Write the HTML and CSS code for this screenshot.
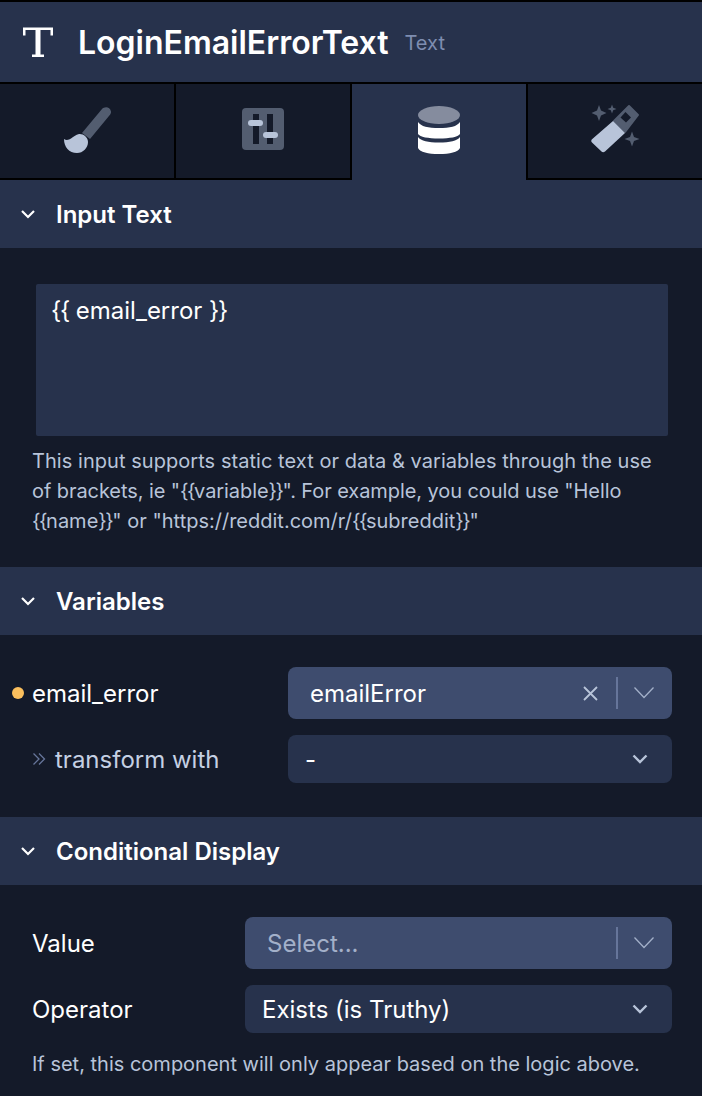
FILE: index.html
```html
<!DOCTYPE html>
<html lang="en">
<head>
<meta charset="utf-8">
<title>LoginEmailErrorText</title>
<link rel="stylesheet" href="styles.css">
</head>
<body>
<div class="panel">
  <header class="head">
    <svg class="t-icon" width="32" height="32" viewBox="0 0 32 32"><path d="M1 1.500h30v8h-2.500V4H18.500v24.500h3.500V31H10v-2.500h3.500V4H3.500v5.500H1z" fill="#fff"/></svg>
    <h1 class="title">LoginEmailErrorText</h1>
    <span class="kind">Text</span>
  </header>
  <nav class="tabs">
    <div class="tab">
      <svg class="ico" width="50" height="50" viewBox="0 0 50 50"><path d="M40 3c2-2.500 8-3 9 2.500.2 1.200-.2 2-.8 3L28 33l-8-6z" fill="#535d70"/><path d="M2 33c2 1.500 5 1 7-.5 2-1.500 5-4 8-4.500 4-.5 9 3 9 8 0 6-5 11-11 11-8 0-13-6-13-14z" fill="#b8c4d9"/></svg>
    </div>
    <div class="tab">
      <svg class="ico" width="50" height="50" viewBox="0 0 50 50"><rect x="4" y="2" width="42" height="42" rx="4" fill="#535d70"/><rect x="15" y="8" width="6" height="30" fill="#141a29"/><rect x="29" y="8" width="6" height="30" fill="#141a29"/><rect x="10" y="14" width="15" height="6" rx="3" fill="#b8c4d9"/><rect x="25" y="26" width="15" height="6" rx="3" fill="#b8c4d9"/></svg>
    </div>
    <div class="tab tab-on">
      <svg class="ico" width="50" height="50" viewBox="0 0 50 50"><ellipse cx="25" cy="9" rx="21" ry="9" fill="#858c9e"/><path d="M4 16c3 4.500 10 6 21 6s18-1.500 21-6v12c-2 3-10 4.500-21 4.500S6 31 4 28z" fill="#fff"/><path d="M4 31c3 4 10 5.500 21 5.500S43 35 46 31v11c-2 4-10 6-21 6S6 46 4 42z" fill="#fff"/></svg>
    </div>
    <div class="tab tab-last">
      <svg class="ico" width="50" height="50" viewBox="0 0 50 50"><path d="M9 -1l2 5.500L16.500 7 11 9.500 9 15 7 9.500 1.500 7 7 4.500z" fill="#535d70"/><path d="M22 -1.500l1.200 3.300L26.500 3l-3.300 1.200L22 7.500l-1.200-3.300L17.500 3l3.300-1.200z" fill="#535d70"/><path d="M42 25.500l2 5.500 5.500 2-5.500 2-2 5.500-2-5.500-5.500-2 5.500-2z" fill="#535d70"/><path d="M39 0 48 9 35 26 24 15z" fill="#535d70" stroke="#535d70" stroke-width="2" stroke-linejoin="round"/><path d="M30.500 11.500l5-5.500 5.500 5.500-5 5z" fill="#141a29"/><path d="M23 15 35 27 15 45.500c-1.200 1-2.500 1-3.500 0L2 36.500c-1-1-1-2.300 0-3.300z" fill="#b8c4d9"/></svg>
    </div>
  </nav>

  <section>
    <div class="sec-head"><svg class="caret" width="16" height="16" viewBox="0 0 16 16"><path d="M2 5l6 6 6-6" fill="none" stroke="#fff" stroke-width="2.200"/></svg><h2 class="sec-title">Input Text</h2></div>
    <div class="sec-body input-body">
      <div class="textarea"><span class="pair-lg">{{</span> email_error <span class="pair-lg">}}</span></div>
      <p class="help"><span class="line-wide">This input supports static text or data &amp; variables through the use</span> <span class="line-narrow">of brackets, ie "<span class="pair">{{</span>variable<span class="pair">}}</span>". For example, you could use "Hello</span> <span class="pair">{{</span>name<span class="pair">}}</span>" or "https://reddit.com/r/<span class="pair">{{</span>subreddit<span class="pair">}}</span>"</p>
    </div>
  </section>

  <section>
    <div class="sec-head"><svg class="caret" width="16" height="16" viewBox="0 0 16 16"><path d="M2 5l6 6 6-6" fill="none" stroke="#fff" stroke-width="2.200"/></svg><h2 class="sec-title">Variables</h2></div>
    <div class="sec-body var-body">
      <div class="row row-var">
        <div class="label var-label"><span class="dot"></span>email_error</div>
        <div class="select select-big var-select">
          <span class="val val-var">emailError</span>
          <svg class="x" width="15" height="15" viewBox="0 0 15 15"><path d="M1 1l13 13M14 1 1 14" fill="none" stroke="#b8c4d9" stroke-width="1.800"/></svg>
          <span class="sep"></span>
          <svg class="chev-thin" width="20" height="14" viewBox="0 0 20 14"><path d="M.5 1.500 10 11.500l9.500-10" fill="none" stroke="#a3b0c9" stroke-width="1.300"/></svg>
        </div>
      </div>
      <div class="row row-trans">
        <div class="label trans-label"><svg class="dbl" width="14" height="14" viewBox="0 0 14 14"><path d="M1.500 1.500 7 7l-5.500 5.500M7 1.500 12.500 7 7 12.500" fill="none" stroke="#66759a" stroke-width="1.300"/></svg>transform with</div>
        <div class="select select-small var-select">
          <span class="val val-dash">-</span>
          <svg class="chev" width="16" height="10" viewBox="0 0 16 10"><path d="M1.500 1.500 8 8l6.500-6.500" fill="none" stroke="#b8c4d9" stroke-width="2.400"/></svg>
        </div>
      </div>
    </div>
  </section>

  <section>
    <div class="sec-head"><svg class="caret" width="16" height="16" viewBox="0 0 16 16"><path d="M2 5l6 6 6-6" fill="none" stroke="#fff" stroke-width="2.200"/></svg><h2 class="sec-title">Conditional Display</h2></div>
    <div class="sec-body cond-body">
      <div class="row row-var">
        <div class="label">Value</div>
        <div class="select select-big cond-select">
          <span class="val val-ph">Select...</span>
          <span class="sep"></span>
          <svg class="chev-thin" width="20" height="14" viewBox="0 0 20 14"><path d="M.5 1.500 10 11.500l9.500-10" fill="none" stroke="#a3b0c9" stroke-width="1.300"/></svg>
        </div>
      </div>
      <div class="row row-op">
        <div class="label">Operator</div>
        <div class="select select-small cond-select">
          <span class="val val-op">Exists (is Truthy)</span>
          <svg class="chev" width="16" height="10" viewBox="0 0 16 10"><path d="M1.500 1.500 8 8l6.500-6.500" fill="none" stroke="#b8c4d9" stroke-width="2.400"/></svg>
        </div>
      </div>
      <p class="help help-cond">If set, this component will only appear based on the logic above.</p>
    </div>
  </section>
</div>
</body>
</html>
```
FILE: styles.css
```css
* { box-sizing: border-box; }
html, body { margin: 0; padding: 0; }
body {
  width: 702px;
  height: 1096px;
  overflow: hidden;
  background: #141a29;
  font-family: Inter, "Liberation Sans", sans-serif;
  color: #fff;
}
.panel { display: flex; flex-direction: column; }
.head {
  height: 84px;
  background: #27324c;
  border-top: 2px solid #000;
  border-bottom: 2px solid #000;
  display: flex;
  align-items: center;
  padding-left: 22px;
}
.t-icon { width: 32px; height: 32px; flex: none; }
.title { margin: 2px 0 0 24px; font-size: 32px; font-weight: 600; line-height: 36px; }
.kind { margin: 2px 0 0 16px; font-size: 20px; color: #7e8db0; }
.tabs { display: grid; grid-template-columns: repeat(4, 176px); height: 96px; }
.tab {
  display: flex;
  align-items: center;
  justify-content: center;
  background: #141a29;
  border-right: 2px solid #000;
  border-bottom: 2px solid #000;
}
.ico { overflow: visible; }
.tab-on { background: #27324c; border-bottom: 0; padding-bottom: 2px; }
.tab-last { border-right: 0; border-left: 2px solid #000; margin-left: -2px; width: 176px; }
.sec-head {
  height: 68px;
  background: #27324c;
  display: flex;
  align-items: center;
  padding-left: 20px;
}
.sec-title { margin: 2px 0 0 20px; font-size: 24px; font-weight: 600; line-height: 30px; }
.sec-body { background: #141a29; }
.input-body { height: 319px; padding: 36px 34px 0 32px; }
.textarea {
  margin-left: 4px;
  height: 152px;
  background: #27324c;
  border-radius: 2px;
  padding: 12px 15px;
  font-size: 24px;
  line-height: 30px;
}
.pair-lg { letter-spacing: -1.2px; }
.pair { letter-spacing: -1.5px; }
.help { margin: 10px 0 0; font-size: 20px; line-height: 30px; color: #b8c4d9; }
.line-wide { letter-spacing: 0.05px; }
.line-narrow { letter-spacing: -0.08px; }
.var-body { height: 182px; padding: 32px 30px 0 32px; }
.cond-body { padding: 32px 30px 0 32px; }
.row { display: flex; align-items: center; justify-content: space-between; }
.row-trans { margin-top: 16px; }
.row-op { margin-top: 16px; }
.label { font-size: 24px; position: relative; }
.dot {
  position: absolute;
  left: -20px;
  top: 50%;
  width: 12px;
  height: 12px;
  margin-top: -6px;
  border-radius: 50%;
  background: #fbbf5d;
}
.trans-label { color: #c5d0e3; display: flex; align-items: center; }
.dbl { margin-right: 9px; }
.select { display: flex; align-items: center; border-radius: 8px; font-size: 24px; }
.select-big { height: 52px; background: #3e4c6e; }
.select-small { height: 48px; background: #27324c; }
.var-select { width: 384px; }
.cond-select { width: 427px; }
.val { flex: 1; }
.val-var { padding-left: 22px; }
.val-dash { padding-left: 17px; }
.val-ph { padding-left: 22px; color: #a3b0c9; }
.val-op { padding-left: 17px; }
.x { margin-right: 18px; }
.sep { width: 2px; height: 32px; background: #66759a; }
.chev-thin { margin: 0 18px 0 16px; }
.chev { margin-right: 24px; }
.help-cond { margin-top: 16px; }
```
